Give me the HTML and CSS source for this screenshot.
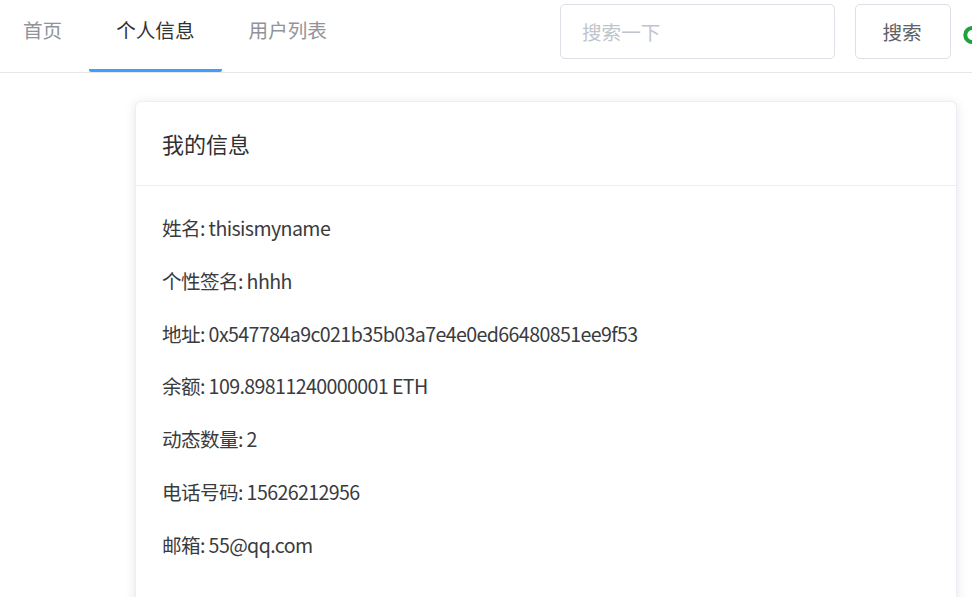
FILE: index.html
```html
<!DOCTYPE html>
<html lang="zh-CN">
<head>
<meta charset="utf-8">
<title>个人信息</title>
<link rel="stylesheet" href="styles.css">
</head>
<body>
<header class="topbar">
  <nav class="menu">
    <a class="menu-item">首页</a>
    <a class="menu-item is-active">个人信息</a>
    <a class="menu-item">用户列表</a>
  </nav>
  <div class="search">
    <input class="search-input" type="text" placeholder="搜索一下">
    <button class="search-btn" type="button">搜索</button>
    <svg class="status" width="18" height="18" viewBox="0 0 18 18" aria-hidden="true">
      <path d="M15 5A7 7 0 1 0 15 13" fill="none" stroke="#1fa23b" stroke-width="4"/>
    </svg>
  </div>
</header>
<main class="content">
  <section class="card">
    <div class="card-header">我的信息</div>
    <div class="card-body">
      <div class="row">姓名: thisismyname</div>
      <div class="row">个性签名: hhhh</div>
      <div class="row">地址: 0x547784a9c021b35b03a7e4e0ed66480851ee9f53</div>
      <div class="row">余额: 109.89811240000001 ETH</div>
      <div class="row">动态数量: 2</div>
      <div class="row">电话号码: 15626212956</div>
      <div class="row">邮箱: 55@qq.com</div>
    </div>
  </section>
</main>
</body>
</html>
```
FILE: styles.css
```css
html, body {
  margin: 0;
  padding: 0;
  background: #fff;
  overflow: hidden;
}
body {
  font-family: "Noto Sans CJK SC", sans-serif;
  color: #303133;
  width: 972px;
  height: 597px;
}
.topbar {
  display: flex;
  align-items: stretch;
  height: 72px;
  border-bottom: 1px solid #e6e6e6;
  white-space: nowrap;
}
.menu {
  display: flex;
  flex: 0 0 560px;
}
.menu-item {
  display: flex;
  align-items: center;
  padding: 0 27px 11px;
  font-size: 19.6px;
  color: #909399;
  border-bottom: 3px solid transparent;
  box-sizing: border-box;
  height: 72px;
}
.menu-item:first-child {
  padding-left: 23px;
}
.menu-item.is-active {
  color: #303133;
  border-bottom-color: #409eff;
  border-radius: 0 0 2px 2px;
}
.search {
  display: flex;
  align-items: flex-start;
  padding-top: 4px;
}
.search-input {
  width: 275px;
  height: 55px;
  box-sizing: border-box;
  border: 1px solid #dcdfe6;
  border-radius: 5px;
  padding: 0 21px;
  font-family: "Noto Sans CJK SC", sans-serif;
  font-size: 19.6px;
  color: #606266;
  outline: none;
}
.search-input::placeholder {
  color: #c0c4cc;
}
.search-btn {
  margin-left: 20px;
  width: 96px;
  height: 55px;
  box-sizing: border-box;
  border: 1px solid #dcdfe6;
  border-radius: 5px;
  background: #fff;
  font-family: "Noto Sans CJK SC", sans-serif;
  font-size: 19.6px;
  color: #606266;
  padding: 0;
  text-indent: -2px;
}
.status {
  margin: 22px 0 0 12px;
  flex: 0 0 18px;
}
.content {
  padding: 28px 0 0 135px;
}
.card {
  width: 822px;
  box-sizing: border-box;
  border: 1px solid #ebeef5;
  border-radius: 6px;
  box-shadow: 0 2px 12px rgba(0, 0, 0, 0.1);
  background: #fff;
}
.card-header {
  padding: 25px 26px;
  font-size: 22px;
  line-height: 33px;
  border-bottom: 1px solid #ebeef5;
}
.card-body {
  padding: 27px 26px 45px;
  display: flex;
  flex-direction: column;
  gap: 23.4px;
}
.row {
  font-size: 19.6px;
  line-height: 29.4px;
  letter-spacing: -0.6px;
  color: #3a3b3e;
}
```
